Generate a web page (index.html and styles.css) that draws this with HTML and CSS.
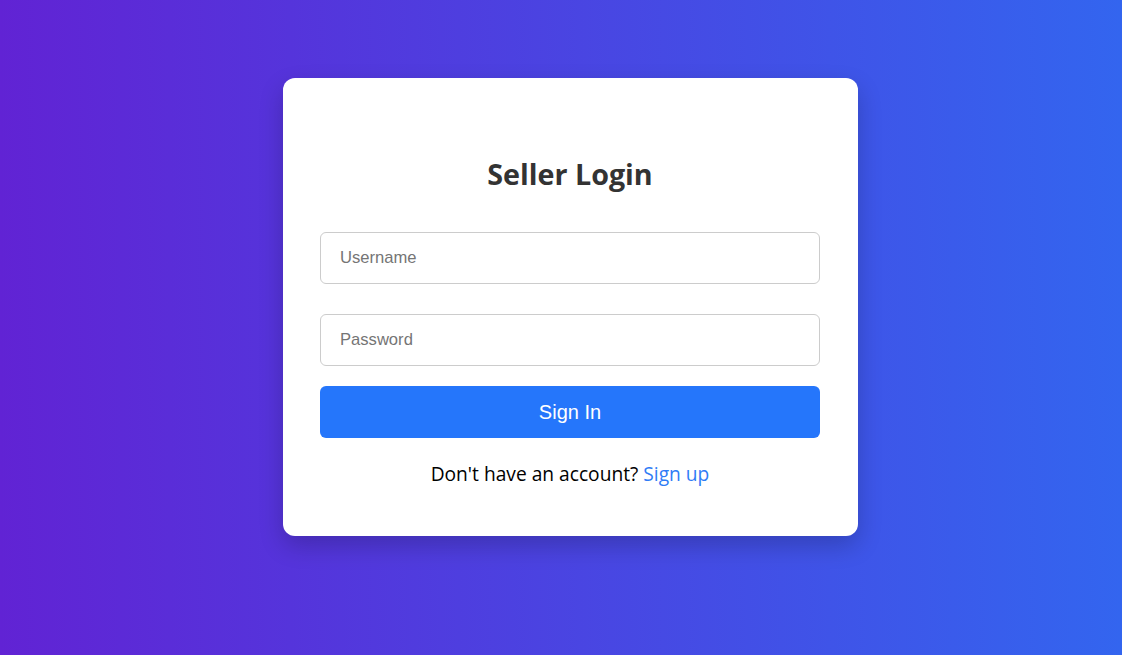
FILE: index.html
```html
<!DOCTYPE html>
<html lang="en">
<head>
<meta charset="utf-8">
<title>Seller Login</title>
<link rel="stylesheet" href="styles.css">
</head>
<body>
<main class="page">
  <form class="card">
    <h1 class="title">Seller Login</h1>
    <input class="field" type="text" placeholder="Username">
    <input class="field" type="password" placeholder="Password">
    <button class="btn" type="button">Sign In</button>
    <p class="footer">Don't have an account? <a class="link" href="#">Sign up</a></p>
  </form>
</main>
</body>
</html>
```
FILE: styles.css
```css
* { box-sizing: border-box; }
html, body { margin: 0; height: 100%; }
body {
  font-family: "Open Sans", "Noto Sans", "DejaVu Sans", sans-serif;
  background: linear-gradient(to right, #6123d4, #3365ef);
}
.page {
  height: 655px;
  display: flex;
  justify-content: center;
  align-items: flex-start;
  padding: 78px 0 0 19px;
}
.card {
  width: 575px;
  height: 458px;
  background: #fff;
  border-radius: 12px;
  box-shadow: 0 10px 25px rgba(0, 0, 0, 0.2);
  padding: 72px 38px 0 37px;
  display: flex;
  flex-direction: column;
}
.title {
  margin: 0 0 34px;
  text-align: center;
  font-size: 28.7px;
  line-height: 48px;
  font-weight: 700;
  color: #333;
}
.field {
  width: 500px;
  height: 52px;
  border: 1px solid #ccc;
  border-radius: 6px;
  padding: 0 19px;
  font-family: "Liberation Sans", Arial, sans-serif;
  font-size: 16.6px;
  color: #333;
  margin-bottom: 30px;
  outline: none;
}
.field::placeholder { color: #757575; }
.field + .field { margin-bottom: 20px; }
.btn {
  width: 500px;
  height: 52px;
  border: none;
  border-radius: 6px;
  background: #2576fb;
  color: #fff;
  font-family: "Liberation Sans", Arial, sans-serif;
  font-size: 20px;
  cursor: pointer;
}
.footer {
  margin: 22px 0 0;
  text-align: center;
  font-size: 19.2px;
  line-height: 28px;
  color: #000;
}
.link { color: #2f7cf6; text-decoration: none; }
```
